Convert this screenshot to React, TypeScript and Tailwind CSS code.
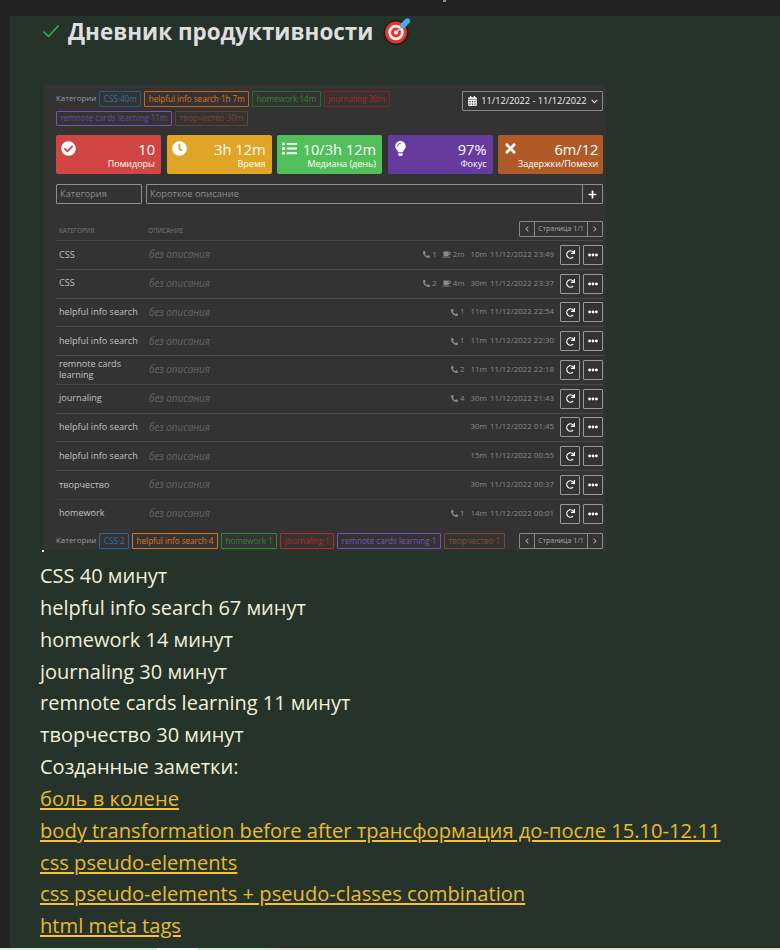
import React from "react";
import {
  FaCheckCircle, FaClock, FaList, FaLightbulb, FaTimes, FaCalendarAlt, FaChevronDown,
  FaPlus, FaChevronLeft, FaChevronRight, FaPhoneAlt, FaCoffee, FaRedo, FaEllipsisH,
} from "react-icons/fa";

const topTags = [
  ["CSS·40m", "border-[#235b86] text-[#2f72a8]"],
  ["helpful info search·1h 7m", "border-[#c8641e] text-[#e2701f]"],
  ["homework·14m", "border-[#256f28] text-[#2b8a2f]"],
  ["journaling·30m", "border-[#8e2020] text-[#b52323]"],
  ["remnote cards learning·11m", "border-[#7c4fb5] text-[#6d4aa5]"],
  ["творчество·30m", "border-[#6e4034] text-[#7c4534]"],
];
const bottomTags = [
  ["CSS·2", "border-[#27689c] text-[#2f72a8]"],
  ["helpful info search·4", "border-[#d8731f] text-[#e2701f]"],
  ["homework·1", "border-[#2b8a2f] text-[#2b8a2f]"],
  ["journaling·1", "border-[#c02525] text-[#c02525]"],
  ["remnote cards learning·1", "border-[#7c4fb5] text-[#7c55c0]"],
  ["творчество·1", "border-[#7a4636] text-[#8a4a38]"],
];
const cards = [
  [FaCheckCircle, "10", "Помидоры", "bg-[#d24545]"],
  [FaClock, "3h 12m", "Время", "bg-[#e0a526]"],
  [FaList, "10/3h 12m", "Медиана (день)", "bg-[#52bf5b]"],
  [FaLightbulb, "97%", "Фокус", "bg-[#673a9e]"],
  [FaTimes, "6m/12", "Задержки/Помехи", "bg-[#b05a28]"],
] as const;
const rows: [string, string, string, string, string][] = [
  ["CSS", "1", "2m", "10m", "11/12/2022 23:49"],
  ["CSS", "2", "4m", "30m", "11/12/2022 23:37"],
  ["helpful info search", "1", "", "11m", "11/12/2022 22:54"],
  ["helpful info search", "1", "", "11m", "11/12/2022 22:30"],
  ["remnote cards learning", "2", "", "11m", "11/12/2022 22:18"],
  ["journaling", "4", "", "30m", "11/12/2022 21:43"],
  ["helpful info search", "", "", "30m", "11/12/2022 01:45"],
  ["helpful info search", "", "", "15m", "11/12/2022 00:55"],
  ["творчество", "", "", "30m", "11/12/2022 00:37"],
  ["homework", "1", "", "14m", "11/12/2022 00:01"],
];
const minutes = ["CSS 40 минут", "helpful info search 67 минут", "homework 14 минут", "journaling 30 минут", "remnote cards learning 11 минут", "творчество 30 минут", "Созданные заметки:"];
const links = ["боль в колене", "body transformation before after трансформация до-после 15.10-12.11", "css pseudo-elements", "css pseudo-elements + pseudo-classes combination", "html meta tags"];

function Tag({ label, cls }: { label: string; cls: string }) {
  return <span className={`flex h-[15.5px] items-center whitespace-nowrap rounded-[1px] border px-[3.5px] text-[8.1px] leading-none ${cls}`}>{label}</span>;
}

function Pager() {
  return (
    <div className="flex h-[16px] w-[84px] shrink-0 items-stretch rounded-[1px] border border-[#8a8a8a] text-[7px] text-[#a8a8a8]">
      <span className="flex w-[15px] items-center justify-center border-r border-[#8a8a8a]"><FaChevronLeft className="h-[6px] w-[6px]" /></span>
      <span className="flex flex-1 items-center justify-center whitespace-nowrap">Страница 1/1</span>
      <span className="flex w-[15px] items-center justify-center border-l border-[#8a8a8a]"><FaChevronRight className="h-[6px] w-[6px]" /></span>
    </div>
  );
}

function Target() {
  return (
    <svg width="28" height="28" viewBox="0 0 28 28" className="shrink-0">
      <circle cx="13" cy="15.5" r="12.5" fill="#1b1b1b" />
      <circle cx="13" cy="15.5" r="11" fill="#e8352b" />
      <circle cx="13" cy="15.5" r="7.8" fill="#f4f4f4" />
      <circle cx="13" cy="15.5" r="5" fill="#e8352b" />
      <circle cx="13" cy="15.5" r="2" fill="#f4f4f4" />
      <path d="M13 15.5 L21 7.5" stroke="#c9d6de" strokeWidth="1.6" />
      <path d="M17.5 7 L23 1.5 Q27.5 0.5 27 5 L21.5 11 L17.5 11 Z" fill="#3fb0ee" />
    </svg>
  );
}

export default function App() {
  return (
    <div className="relative flex h-[950px] w-[780px] flex-col overflow-hidden bg-[#222222] font-['Open_Sans',sans-serif]">
      <span className="absolute left-[443px] top-0 h-[2px] w-[3px] bg-[#8a8a8a]" />
      <div className="ml-[10px] mt-4 flex min-h-0 flex-1 flex-col bg-[#25332a] pl-[30px]">
        <div className="flex h-[69px] items-start">
          <svg width="18" height="14" viewBox="0 0 18 14" className="ml-[2px] mt-[8px] shrink-0" fill="none">
            <path d="M1.5 7.5 L6.5 12.5 L16.5 1.5" stroke="#2fb65a" strokeWidth="1.5" />
          </svg>
          <h1 className="ml-[8px] text-[22.4px] font-bold leading-[32px] text-[#dedede]">Дневник продуктивности</h1>
          <span className="ml-[10px] mt-[1px]"><Target /></span>
        </div>

        <div className="ml-[3px] flex h-[465px] w-[563px] flex-col bg-[#333333] pl-[13px] pr-[3px] pt-[6px] text-[#b8b8b8]">
          <div className="flex items-start justify-between">
            <div className="flex w-[400px] flex-wrap items-center gap-x-[3px] gap-y-[4px]">
              <span className="text-[7.9px] text-[#9a9aa0]">Категории</span>
              {topTags.map(([l, c]) => <Tag key={l} label={l} cls={c} />)}
            </div>
            <div className="flex h-[20px] w-[141px] items-center justify-center gap-[4px] rounded-[1px] border border-[#8a8a8a] pl-[1px] text-[9.2px] text-[#f0f0f0]">
              <FaCalendarAlt className="h-[10px] w-[9px]" />
              <span className="whitespace-nowrap">11/12/2022 - 11/12/2022</span>
              <FaChevronDown className="h-[7px] w-[7px]" />
            </div>
          </div>

          <div className="mt-[9px] flex justify-between">
            {cards.map(([Icon, value, label, bg]) => (
              <div key={label} className={`flex h-[39px] w-[105px] justify-between rounded-[2px] pl-[5px] pr-[6px] pt-[6px] text-white ${bg}`}>
                <Icon className="h-[15px] w-[15px] shrink-0" />
                <div className="text-right">
                  <div className="whitespace-nowrap text-[14.6px] leading-[17px]">{value}</div>
                  <div className="whitespace-nowrap text-[9px] leading-[12px]">{label}</div>
                </div>
              </div>
            ))}
          </div>

          <div className="mt-[10px] flex h-[20px] gap-[4px]">
            <div className="flex w-[86px] items-center rounded-[1px] border border-[#8e8e8e] px-[3px] text-[9.3px] text-[#8c8c8c]">Категория</div>
            <div className="flex flex-1 items-center rounded-[1px] border border-[#8e8e8e] pl-[3px] text-[9.3px] text-[#8c8c8c]">
              <span className="flex-1">Короткое описание</span>
              <span className="flex h-full w-[20px] items-center justify-center border-l border-[#8e8e8e] text-white"><FaPlus className="h-[9px] w-[9px]" /></span>
            </div>
          </div>

          <div className="mt-[17px] flex h-[19px] items-start justify-between">
            <div className="flex pl-[3px] pt-[5px] text-[6.3px] text-[#7a7a7a]">
              <span className="w-[89px]">КАТЕГОРИЯ</span>
              <span>ОПИСАНИЕ</span>
            </div>
            <Pager />
          </div>

          <div className="flex flex-col">
            {rows.map(([cat, calls, brk, dur, date], i) => (
              <div key={i} className={`flex h-[28.75px] items-center border-t ${i === 9 ? "border-[#3c3c3c]" : "border-[#4a4a4a]"}`}>
                <span className="w-[93px] pl-[3px] pr-2 text-[9.1px] leading-[10.5px] text-[#c2c2c2]">{cat}</span>
                <span className="flex-1 text-[9.9px] italic text-[#666666]">без описания</span>
                <div className="flex items-center text-[7.9px] text-[#8a8a8a]">
                  {calls && <span className="flex items-center gap-[2px]"><FaPhoneAlt className="h-[7px] w-[7px]" />{calls}</span>}
                  {brk && <span className="ml-[5px] flex items-center gap-[2px]"><FaCoffee className="h-[7px] w-[9px]" />{brk}</span>}
                  <span className="ml-[6px]">{dur}</span>
                  <span className="ml-[3px]">{date}</span>
                </div>
                <button className="ml-[6px] flex h-[20px] w-[20px] items-center justify-center rounded-[1px] border border-[#9a9a9a] text-white"><FaRedo className="h-[9px] w-[9px]" /></button>
                <button className="ml-[3px] flex h-[20px] w-[20px] items-center justify-center rounded-[1px] border border-[#9a9a9a] text-white"><FaEllipsisH className="h-[10px] w-[10px]" /></button>
              </div>
            ))}
          </div>

          <div className="mt-[5.5px] flex items-center justify-between">
            <div className="flex items-center gap-[3px]">
              <span className="text-[7.9px] text-[#9a9aa0]">Категории</span>
              {bottomTags.map(([l, c]) => <Tag key={l} label={l} cls={c} />)}
            </div>
            <Pager />
          </div>
        </div>

        <span className="ml-[2px] h-[2px] w-[2px] bg-[#e8e6d4]" />
        <div className="mt-[8px] text-[20px] leading-[31.85px] text-[#f2f0dc]">
          {minutes.map((m) => <div key={m}>{m}</div>)}
          {links.map((l) => (
            <div key={l}><a className="text-[20.15px] text-[#e9bb33] underline decoration-[#fbc02d] decoration-2 underline-offset-[2px]">{l}</a></div>
          ))}
        </div>
      </div>
      <div className="h-[2px] shrink-0 bg-[linear-gradient(90deg,#d5eedd_0,#d5eedd_157px,#ffffff_157px,#ffffff_198px,#d5eedd_198px,#d5eedd_260px,#ecddcf_280px,#ecddcf_100%)]" />
    </div>
  );
}
